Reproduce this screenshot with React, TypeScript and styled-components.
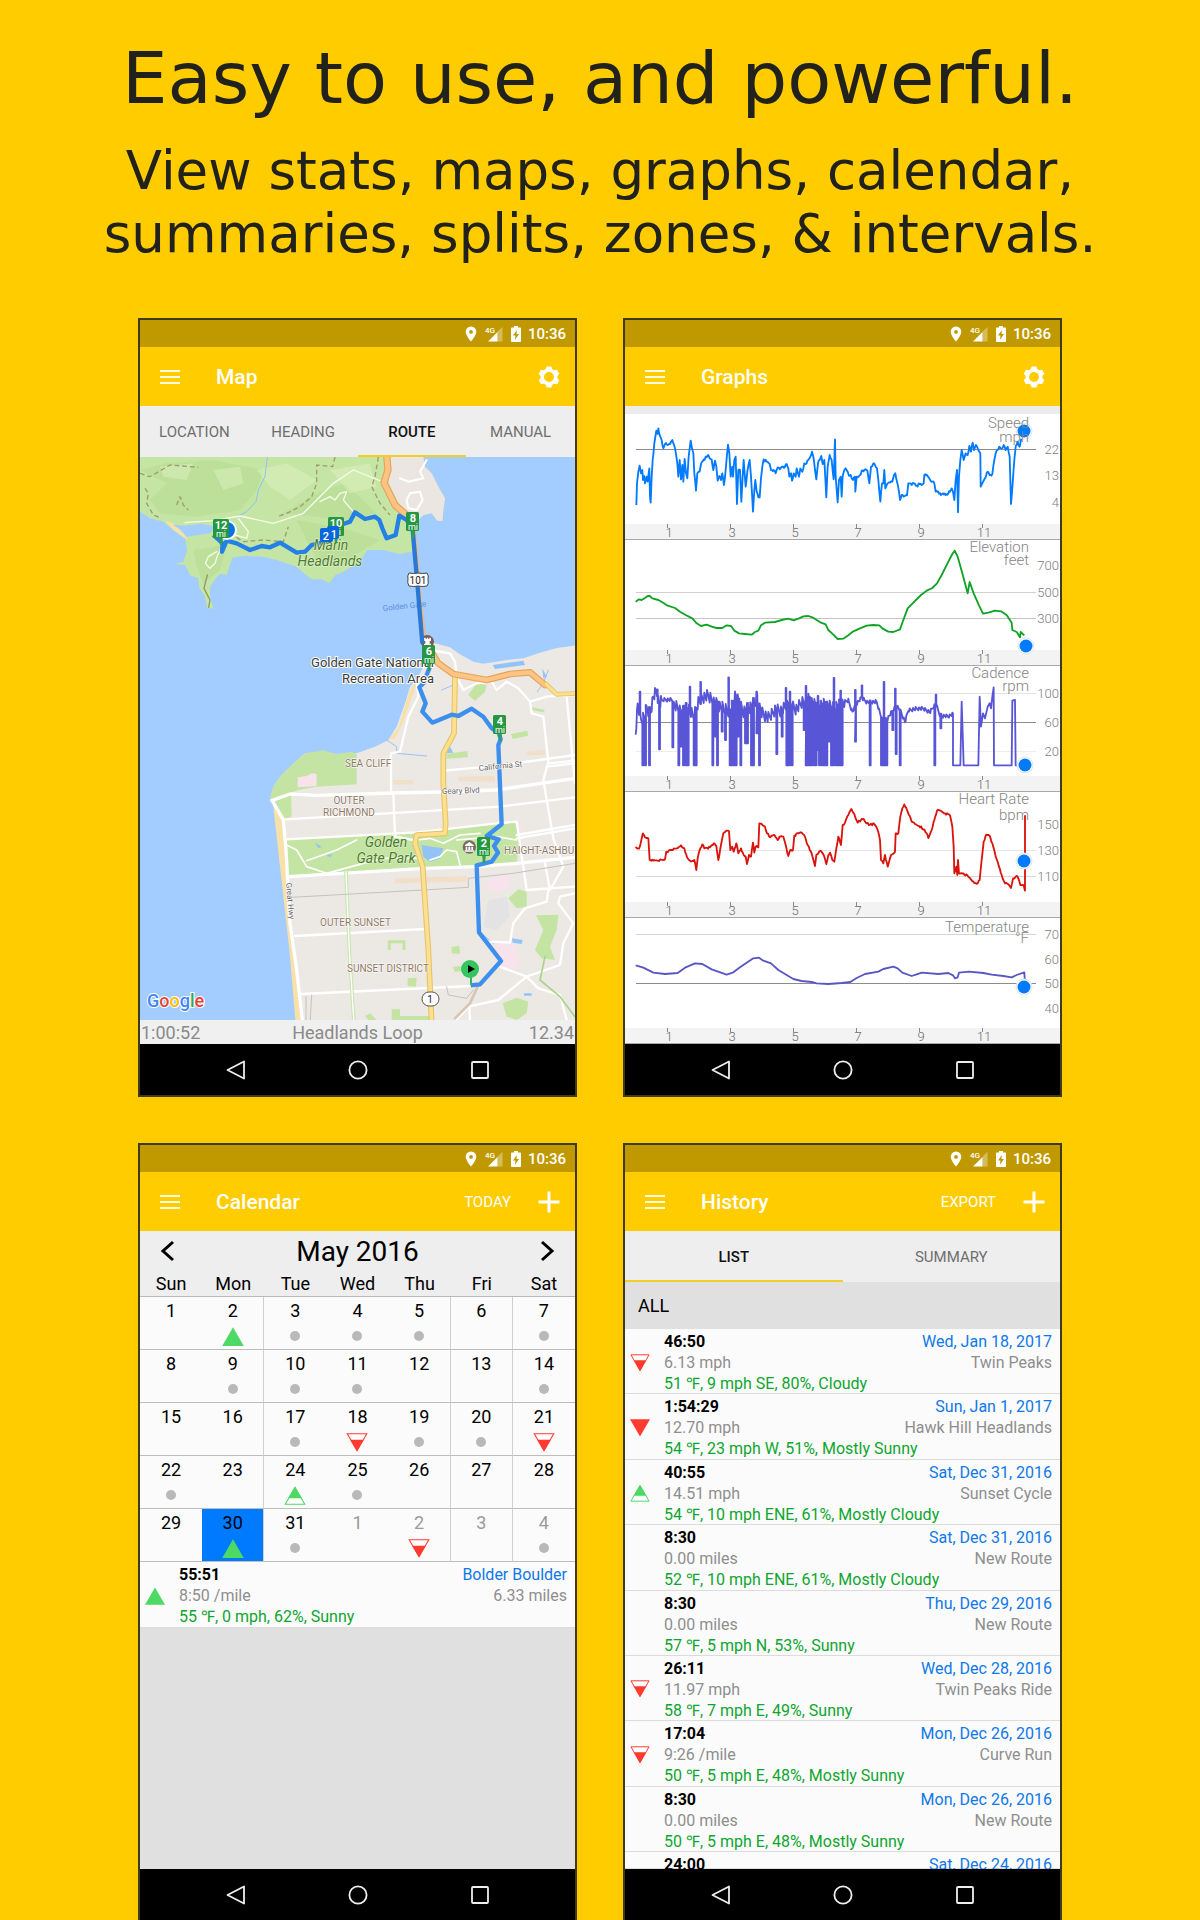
import React from 'react';
import styled, { createGlobalStyle } from 'styled-components';

const GlobalStyle = createGlobalStyle`
  * { box-sizing: border-box; }
  body { margin: 0; background: #ffcc00; }
  h1, h2, p, ul { margin: 0; padding: 0; }
  button { font: inherit; color: inherit; background: none; border: 0; padding: 0; cursor: pointer; }
`;

const UI = `Roboto, "Noto Sans", sans-serif`;

/* ---------- Page ---------- */

const Poster = styled.main`
  height: 100vh;
  overflow: hidden;
  padding-top: 36px;
  background: #ffcc00;
  font-family: ${UI};
`;

const Headline = styled.header`
  text-align: center;
  color: #22221c;
  font-family: "DejaVu Sans", sans-serif;
`;

const Title = styled.h1`
  font-size: 72px;
  line-height: 84px;
  font-weight: 400;
`;

const Subtitle = styled.p`
  margin-top: 19px;
  font-size: 53px;
  line-height: 63px;
`;

const PhoneGrid = styled.div`
  display: grid;
  grid-template-columns: 1fr 1fr;
  gap: 46px;
  margin-top: 53px;
  padding: 0 11.5%;
`;

/* ---------- Phone ---------- */

const PhoneFrame = styled.section`
  display: flex;
  flex-direction: column;
  aspect-ratio: 439 / 779;
  min-width: 0;
  border: 2px solid #403a1c;
  background: #eeeeee;
  overflow: hidden;
`;

const StatusBar = styled.div`
  flex: none;
  display: flex;
  align-items: center;
  justify-content: flex-end;
  height: 27px;
  padding-right: 9px;
  background: #c09900;
  color: #fff;
  font-size: 15px;
  font-weight: 500;
  svg { display: block; }
`;

const StatusIcons = styled.span`
  display: flex;
  align-items: center;
  gap: 8px;
  margin-right: 7px;
`;

const AppBar = styled.div`
  flex: none;
  display: flex;
  align-items: center;
  height: 59px;
  padding: 0 15px 0 20px;
  background: #ffcc00;
  color: #fff;
`;

const AppTitle = styled.h2`
  flex: 1;
  margin-left: 36px;
  font-size: 21px;
  line-height: 28px;
  font-weight: 500;
`;

const IconButton = styled.button`
  display: flex;
  align-items: center;
  justify-content: center;
  svg { display: block; }
`;

const TextAction = styled.button`
  margin-right: 27px;
  font-size: 15px;
  line-height: 20px;
`;

const Content = styled.div`
  flex: 1;
  min-height: 0;
  display: flex;
  flex-direction: column;
  overflow: hidden;
`;

const NavBar = styled.nav`
  flex: none;
  display: flex;
  align-items: center;
  justify-content: center;
  gap: 82px;
  height: 51px;
  background: #000;
`;

const NavButton = styled(IconButton)`
  width: 40px;
  height: 40px;
`;

const TabRow = styled.div`
  flex: none;
  display: flex;
  height: 51px;
  background: #eeeeee;
`;

const Tab = styled.button<{ $active?: boolean }>`
  flex: 1;
  padding-top: 2px;
  border-bottom: 2px solid ${p => (p.$active ? '#f0d028' : 'transparent')};
  color: ${p => (p.$active ? '#111' : '#6e6e6e')};
  font-size: 15px;
  font-weight: ${p => (p.$active ? 500 : 400)};
`;

const Svg = styled.svg`
  display: block;
  width: 100%;
  font-family: ${UI};
`;

function PinIcon() {
  return (
    <svg width="12" height="16" viewBox="0 0 12 16" fill="#fff">
      <path fillRule="evenodd" d="M6 0.5a5.2 5.2 0 0 1 5.3 5.3C11.3 9.5 6 15.6 6 15.6S.7 9.5.7 5.8A5.2 5.2 0 0 1 6 .5zM6 4a1.9 1.9 0 1 0 0 3.8A1.9 1.9 0 0 0 6 4z" />
    </svg>
  );
}

function SignalIcon() {
  return (
    <svg width="18" height="16" viewBox="0 0 18 16" fill="#fff">
      <path d="M12.5 5.5 17.5 1v14.5h-5z" opacity=".35" />
      <path d="M3 15.5 12.5 6v9.500z" />
      <text x="0" y="7" fontSize="8" fontWeight="500" fontFamily="Roboto, sans-serif">4G</text>
    </svg>
  );
}

function BatteryIcon() {
  return (
    <svg width="10" height="16" viewBox="0 0 10 16">
      <path fill="#fff" d="M3 0h4v1.600h2.200c.5 0 .8.3.8.800V15.200c0 .5-.3.8-.8.8H.8c-.5 0-.8-.3-.8-.800V2.400c0-.5.3-.8.800-.8H3z" />
      <path fill="#c09900" d="M5.800 4 2 9.600h2.400L4 13.700 8 8H5.500z" />
    </svg>
  );
}

function MenuIcon() {
  return (
    <svg width="20" height="14" viewBox="0 0 20 14" stroke="#fffbe0" strokeWidth="2">
      <path d="M0 1h20M0 7h20M0 13h20" />
    </svg>
  );
}

function GearIcon() {
  return (
    <svg width="22" height="22" viewBox="-11 -11 22 22">
      <circle r="6.700" fill="none" stroke="#fff" strokeWidth="3.400" />
      {[0, 60, 120, 180, 240, 300].map(a => (
        <path key={a} transform={`rotate(${a})`} d="M-3.600-7-2.300-10.600H2.300L3.600-7z" fill="#fff" />
      ))}
    </svg>
  );
}

function PlusIcon() {
  return (
    <svg width="22" height="22" viewBox="0 0 22 22" stroke="#fff" strokeWidth="3">
      <path d="M11 .5v21M.5 11h21" />
    </svg>
  );
}

function Phone({ title, action, icon, children }: {
  title: string; action?: string; icon: 'gear' | 'plus'; children: React.ReactNode;
}) {
  return (
    <PhoneFrame>
      <StatusBar>
        <StatusIcons>
          <PinIcon />
          <SignalIcon />
          <BatteryIcon />
        </StatusIcons>
        10:36
      </StatusBar>
      <AppBar>
        <IconButton aria-label="Menu"><MenuIcon /></IconButton>
        <AppTitle>{title}</AppTitle>
        {action && <TextAction>{action}</TextAction>}
        <IconButton aria-label={icon === 'gear' ? 'Settings' : 'Add'}>
          {icon === 'gear' ? <GearIcon /> : <PlusIcon />}
        </IconButton>
      </AppBar>
      <Content>{children}</Content>
      <NavBar>
        <NavButton aria-label="Back">
          <svg width="20" height="20" viewBox="0 0 20 20" fill="none" stroke="#eee" strokeWidth="1.800" strokeLinejoin="round"><path d="M18 1.500v17L1.500 10z" /></svg>
        </NavButton>
        <NavButton aria-label="Home">
          <svg width="20" height="20" viewBox="0 0 20 20" fill="none" stroke="#eee" strokeWidth="1.800"><circle cx="10" cy="10" r="8.600" /></svg>
        </NavButton>
        <NavButton aria-label="Recent apps">
          <svg width="20" height="20" viewBox="0 0 20 20" fill="none" stroke="#eee" strokeWidth="1.800"><rect x="2" y="2" width="16" height="16" rx="1" /></svg>
        </NavButton>
      </NavBar>
    </PhoneFrame>
  );
}

/* ---------- Map ---------- */

const MapArea = styled.div`
  flex: 1;
  min-height: 0;
  background: #a3ccff;
  svg { height: 100%; }
`;

const MapFooter = styled.div`
  flex: none;
  display: grid;
  grid-template-columns: 1fr auto 1fr;
  height: 24px;
  padding: 0 1px;
  background: #f0f0f0;
  color: #8a8a8a;
  font-size: 18px;
  line-height: 25px;
  span:last-child { text-align: right; }
`;

function MileMarker({ x, y, n }: { x: number; y: number; n: string }) {
  return (
    <g transform={`translate(${x} ${y})`}>
      <path d="M-2 17h4l-1 9h-2z" fill="#2ea04e" />
      <rect x={n.length > 1 ? -8 : -7} y="0" width={n.length > 1 ? 16 : 13} height="19" rx="1.500" fill="#259641" />
      <text y="10" textAnchor="middle" fontSize="11" fontWeight="700" fill="#fff">{n}</text>
      <text y="18" textAnchor="middle" fontSize="9" fill="#fff">mi</text>
    </g>
  );
}

function RouteMap() {
  return (
    <Svg viewBox="0 0 435 563" preserveAspectRatio="xMidYMid slice" role="img" aria-label="Route map">
      <g transform="scale(0.33333) translate(-30 -21)" fill="none" strokeLinejoin="round" strokeLinecap="round">
        <rect x="0" y="0" width="1400" height="1740" fill="#a3ccff" />

        {/* Headlands */}
        <path fill="#c5e5a5" d="M30 21H880L885 50 905 70 925 110 945 145 940 180 937 213 922 212 905 190 880 195 860 215 850 240 846 305 810 312 760 300 712 300 690 335 640 365 615 376 598 400 575 388 545 388 525 372 500 350 440 330 400 320 345 318 308 322 300 345 290 375 270 372 255 388 240 410 240 440 250 475 232 475 225 440 207 412 205 385 182 377 165 345 135 342 160 335 172 300 165 265 130 240 100 215 60 205 30 185z" />
        <path fill="#b5da91" d="M30 60 110 40 250 30 400 60 380 120 330 180 200 200 90 190 60 150 110 100zM460 190 560 130 640 100 700 150 740 190 640 210 560 200zM500 210 640 235 750 270 700 300 620 350 560 330zM190 300 290 285 270 360 220 400 200 350z" opacity=".55" />
        <path fill="#d8eebb" d="M90 50 190 40 170 90 100 80zM380 60 470 40 560 90 480 150 420 110zM600 60 720 40 740 110 660 130zM250 60 330 50 340 100 280 120z" opacity=".6" />
        <path fill="#ebe6e2" d="M782 21H880L885 50 905 70 925 110 945 145 940 180 937 213 922 212 905 190 880 195 860 215 848 210 810 170 776 100z" />
        <path fill="#f6e1ad" d="M105 212 130 220 160 250 172 268 160 262 130 240z" />
        <path fill="#a3ccff" d="M128 224 165 227 215 221 255 230 240 250 200 256 170 260 150 238z" />
        <path stroke="#8fc1f3" strokeWidth="3" d="M412 21 405 80 385 120 378 155 350 185 320 200" />
        <g stroke="#f7fbe9" strokeWidth="4">
          <path d="M165 218 250 212 330 198 430 220 520 190 560 150 610 100 670 60 750 92M570 155 600 140 615 150 630 130 650 125 640 150 670 185M325 205 355 245 350 265 300 250M260 305 235 320 226 340 240 355 255 340 262 318 270 300" />
          <path stroke="#fff" strokeWidth="6" d="M890 30 870 65 880 85 835 95 810 85M840 130 870 125 878 150 860 180 835 175 830 150z" />
        </g>
        <g stroke="#a09a6c" strokeWidth="4" strokeDasharray="14 9" strokeLinecap="butt">
          <path d="M30 70 60 80 120 45 205 52M45 115 55 130 50 160 70 195 95 205M615 21 608 50 560 45 560 100 545 140 510 170 470 190 440 200M745 21 735 80 725 110 750 160 780 195M300 250 340 275 400 270 460 275 475 230M140 165 150 140 160 165 175 180" />
        </g>
        <path stroke="#8f9a68" strokeWidth="4" d="M232 375 222 415 240 450 236 472" />
        <path stroke="#e9a25b" strokeWidth="22" d="M770 15 774 60 762 98 795 165 848 212" />
        <path stroke="#fbc483" strokeWidth="15" d="M770 15 774 60 762 98 795 165 848 212" />
        <path stroke="#e8b884" strokeWidth="7" d="M850 215 860 300 872 450 885 560" />

        {/* City */}
        <path fill="#ece8e4" d="M880 575 915 580 960 592 985 610 1030 635 1060 641 1130 630 1180 625 1230 608 1280 594 1340 586V1720H505L480 1500 470 1350 450 1200 437 1080 422 1048 430 1010 450 980 480 950 525 910 580 905 620 912 680 910 740 888 775 870 800 830 825 760 840 710 865 680 885 640z" />
        <path fill="#f8e0a9" d="M865 680 838 725 805 835 775 868 795 866 820 815 850 730zM430 1060 458 1105 485 1440 522 1720H497L478 1500 450 1250 432 1090z" />
        <path fill="#c3e4a2" d="M430 1010 450 980 480 950 525 910 580 901 620 912 665 905 680 912V1003L560 1010 505 1020 430 1048 420 1045zM432 1050 483 1025 485 1100 465 1108zM468 1168 860 1147 1155 1116 1168 1165 1160 1242 1040 1252 475 1278z" />
        <path fill="#c3e4a2" d="M1015 735 1040 700 1070 705 1065 725 1035 752zM1143 852 1192 842 1194 857 1148 867zM950 912 1012 903 1014 922 950 926zM1135 1345 1165 1318 1190 1325 1190 1370 1160 1375zM1218 1396 1285 1394 1280 1440 1260 1490 1275 1530 1235 1525 1215 1500 1240 1440zM1118 1660 1160 1643 1195 1655 1190 1690 1160 1710 1130 1700zM965 1490 988 1488 990 1512 965 1510zM968 1550 990 1548 998 1562 975 1566zM833 1585 860 1583 858 1610 833 1608zM785 1678H810V1698H900V1710H785zM705 1698 720 1690 740 1710H715zM1200 770 1245 780 1240 787 1205 780z" />
        <path fill="none" stroke="#c3e4a2" strokeWidth="9" strokeLinejoin="miter" strokeLinecap="butt" d="M778 1500V1475H822V1500" />
        <path fill="#f8e2ec" d="M503 982 530 978 545 970 560 972V1008L503 1012zM1085 1285 1130 1275 1140 1310 1100 1325 1060 1315zM1095 1480 1150 1475 1168 1520 1165 1560 1110 1550zM1160 1120 1175 1118 1180 1150 1165 1150z" />
        <path fill="#dfe0e4" d="M1075 1350 1130 1340 1140 1400 1100 1440 1060 1430z" opacity=".7" />
        <path fill="#93c3f6" d="M875 1185 905 1190 940 1195 930 1225 900 1235 880 1220zM555 1178 575 1190 565 1195zM590 1215 608 1213 600 1222zM1145 1465 1178 1470 1175 1482 1148 1478zM1088 645 1180 632 1185 645 1095 657zM1182 1630H1205V1637H1182zM1237 655 1250 680 1240 685zM945 910 960 890 970 908z" />
        <path stroke="#96c4f5" strokeWidth="3" d="M770 870 800 890 800 910 890 918M935 720 970 705M1255 660 1240 700 1222 725M1060 1455 1090 1480" />

        <g fill="#f8d7b4" opacity=".55">
          <path d="M795 1285 1010 1278V1295L795 1300zM790 990 850 990V1003L790 1003zM985 980 1095 978V995L985 993zM1190 905 1245 900V915L1190 915z" />
        </g>

        <g stroke="#fff" strokeWidth="7">
          <path strokeWidth="10" d="M425 1052 480 1032 560 1036 790 1029 930 1026 1100 1020 1335 985M428 1055 460 1110 468 1200 480 1420 500 1560 518 1720M475 1280 880 1255 1040 1250 1160 1240 1335 1222" />
          <path d="M465 1108 860 1085 1110 1070 1335 1042M783 1030V910L810 905 835 800 865 740 860 690M790 1030 795 1160 850 1170M468 1168 860 1147 1100 1120 1160 1115 1190 1320M940 962 1100 948 1335 915M1250 950 1335 940M1255 940 1335 932M1160 1165 1335 1135M1160 1155 1335 1125" />
          <path d="M495 1458 885 1437M515 1632 1020 1608M980 680 1000 720 1040 700 1085 695 1100 720 1130 695 1165 715 1200 755 1250 740 1335 735M1200 755 1205 790 1240 800 1255 935 1240 990 1270 1165M1310 740 1335 1000M1245 1240 1260 1320 1300 1250 1270 1165M900 600 960 610 975 635 980 680M1190 1320 1335 1310M1080 1475 1140 1478 1150 1420 1185 1375 1250 1355 1255 1320M1335 1330 1290 1340 1285 1360 1315 1400 1330 1420 1300 1480 1290 1545 1190 1580 1110 1550M1190 1580 1105 1650 1015 1670 975 1715M1190 1580 1225 1615 1290 1635 1310 1710M1018 1670 1020 1720" />
          <path strokeWidth="5" d="M470 1185 500 1200 530 1250 590 1270 700 1240 760 1225 860 1225M530 1232 620 1200 680 1170M860 1170 900 1165 940 1180 990 1155 1050 1150M900 1230 930 1220 950 1200 980 1205 990 1245M980 1170 1100 1160 1160 1170" />
        </g>
        <path stroke="#c9e7b1" strokeWidth="11" d="M648 1265 658 1500 672 1720" />
        <path stroke="#fff" strokeWidth="4" d="M648 1265 658 1500 672 1720" />
        <path stroke="#c5c1be" strokeWidth="3" d="M485 1342 880 1320 1015 1312V1285L1150 1270 1335 1240M545 1635 540 1720M950 1610 955 1635 1010 1645 1030 1620M528 1640V1720" />
        <g strokeWidth="17" stroke="#e5c069">
          <path d="M975 680 972 850 940 910 940 1000 947 1120 945 1150 860 1155 855 1180 878 1250 895 1500 905 1720" />
          <path stroke="#fce08c" strokeWidth="11" d="M975 680 972 850 940 910 940 1000 947 1120 945 1150 860 1155 855 1180 878 1250 895 1500 905 1720" />
          <path stroke="#e9a25b" strokeWidth="20" d="M890 580 925 640 970 672 1070 690 1140 672 1200 667 1245 705" />
          <path stroke="#fcc585" strokeWidth="13" d="M890 580 925 640 970 672 1070 690 1140 672 1200 667 1245 705" />
          <path d="M1248 702 1280 733 1345 730" strokeWidth="14" />
          <path d="M1248 702 1280 733 1345 730" strokeWidth="9" stroke="#fce08c" />
          <path stroke="#d9c4b0" strokeWidth="8" d="M975 1705 1020 1660 1045 1605" />
          <path stroke="#a9d58b" strokeWidth="5" d="M1245 1520 1230 1590 1290 1640 1335 1700" />
        </g>

        <circle cx="1018" cy="1191" r="20" fill="#7c6a64" />
        <path fill="#fff" d="M1005 1185 1018 1176 1031 1185V1188H1005zM1007 1190h5v10h-5zM1015 1190h6v10h-6zM1024 1190h5v10h-5zM1004 1201h28v4h-28z" />
        <circle cx="892" cy="575" r="20" fill="#7c5a52" />
        <path fill="#fff" d="M882 563h5v4h3v-4h5v4h3v-4h5v10h-4v8h4v6h-21v-6h4v-8h-4z" />
      </g>

      <text transform="translate(243 154) rotate(-6)" fontSize="8" fill="#5b8fd6">Golden Gate</text>

      <g transform="scale(0.33333) translate(-30 -21)" fill="none" strokeLinejoin="round" strokeLinecap="butt" stroke="#3d8fee" strokeWidth="13">
        <path d="M1022 1606 1050 1603 1113 1533 1047 1447 1040 1246 1085 1235 1104 1208 1092 1188 1106 1168 1070 1158 1115 1123 1105 885 1112 868 1107 850 1085 835 1060 800 1025 776 985 798 965 794 907 818 877 785 887 760 868 712 885 695 890 675 900 650 895 600" />
        <path stroke="#2a78d4" d="M877 580 862 400 848 240" />
        <path stroke="#2580e6" d="M848 240 830 210 808 197 797 255 770 265 757 235 748 210 735 200 705 207 675 187 660 215 640 222 605 240 590 275 545 285 525 305 500 308 450 278 420 292 395 288 360 300 320 280 290 272 276 305 278 280 250 255" />
      </g>

      <g fontSize="14" fontStyle="italic" fill="#4b7a2c" textAnchor="middle" stroke="#e7f5d6" strokeWidth="1" paintOrder="stroke">
        <text x="191" y="93">Marin</text>
        <text x="190" y="109">Headlands</text>
        <text x="246" y="390">Golden</text>
        <text x="246" y="406">Gate Park</text>
      </g>

      <text x="294" y="210" textAnchor="end" fontSize="13" fill="#3c3c3c" stroke="#fff" strokeWidth="2" paintOrder="stroke">Golden Gate National</text>
      <text x="294" y="226" textAnchor="end" fontSize="13" fill="#3c3c3c" stroke="#fff" strokeWidth="2" paintOrder="stroke">Recreation Area</text>

      <g fontSize="10" fill="#8d7763" stroke="#fff" strokeWidth="1" paintOrder="stroke">
        <text x="205" y="310">SEA CLIFF</text>
        <text x="209" y="347" textAnchor="middle">OUTER</text>
        <text x="209" y="359" textAnchor="middle">RICHMOND</text>
        <text x="364" y="397">HAIGHT-ASHBUR</text>
        <text x="180" y="469">OUTER SUNSET</text>
        <text x="207" y="515">SUNSET DISTRICT</text>
      </g>
      <g fontSize="8" fill="#5f5f5f" stroke="#fff" strokeWidth="1" paintOrder="stroke">
        <text transform="translate(339 314) rotate(-6)">California St</text>
        <text transform="translate(302 337) rotate(-2)">Geary Blvd</text>
        <text transform="translate(146 426) rotate(85)">Great Hwy</text>
      </g>

      <circle cx="87" cy="73" r="9" fill="#0a72e8" stroke="#fff" strokeWidth="2" />
      <MileMarker x={81} y={62} n="12" />
      <MileMarker x={196} y={60} n="10" />
      <MileMarker x={273} y={55} n="8" />
      <MileMarker x={289} y={188} n="6" />
      <MileMarker x={360} y={258} n="4" />
      <MileMarker x={344} y={380} n="2" />
      <g fontSize="11" fontWeight="500" fill="#fff" textAnchor="middle">
        <rect x="187" y="69" width="12" height="13" rx="2" fill="#0a66dc" />
        <rect x="180" y="71" width="13" height="14" rx="2" fill="#0a66dc" />
        <text x="186" y="83">2</text>
        <text x="194" y="81">1</text>
      </g>

      <path d="M269 116q4 1 9 0 5 1 9 0 2 3 1 6 1 5-1 7-5 1-9 0-4 1-9 0-2-3-1-7-1-3 1-6z" fill="#fff" stroke="#444" strokeWidth="1" />
      <text x="278" y="127" textAnchor="middle" fontSize="10" fill="#222">101</text>
      <rect x="282" y="535" width="17" height="14" rx="7" fill="#fff" stroke="#555" strokeWidth="1" />
      <text x="290" y="546" textAnchor="middle" fontSize="10" fill="#222">1</text>

      <path d="M330 518h2v10h-2z" fill="#35b85c" />
      <circle cx="330" cy="512" r="9" fill="#35c45d" />
      <path d="M328 508l7 4-7 4z" fill="#000" />

      <text x="7" y="550" fontSize="18" fontWeight="500" stroke="#fff" strokeWidth="2" paintOrder="stroke">
        <tspan fill="#4285f4">G</tspan><tspan fill="#ea4335">o</tspan><tspan fill="#fbbc05">o</tspan><tspan fill="#4285f4">g</tspan><tspan fill="#34a853">l</tspan><tspan fill="#ea4335">e</tspan>
      </text>
    </Svg>
  );
}

/* ---------- Graphs ---------- */

const ChartStack = styled.div`
  flex: 1;
  min-height: 0;
  display: grid;
  grid-template-rows: repeat(5, 1fr);
  padding-top: 8px;
  background: #ececec;
  svg { height: 100%; }
`;

/* Adds sensor noise between the samples of a trace. */
function roughen(path: string, amplitude: number) {
  const v = path.slice(1).split(' ').map(Number);
  const out: string[] = [`${v[0]} ${v[1]}`];
  for (let i = 2; i < v.length; i += 2) {
    const dx = v[i] - v[i - 2];
    const dy = v[i + 1] - v[i - 1];
    const steps = Math.max(1, Math.round(dx / 3));
    for (let s = 1; s < steps; s++) {
      const x = v[i - 2] + (dx * s) / steps;
      const noise = (((Math.round(x) * 29) % 17) / 16 - 0.5) * 2 * amplitude;
      out.push(`${x.toFixed(1)} ${(v[i - 1] + (dy * s) / steps + noise).toFixed(1)}`);
    }
    out.push(`${v[i]} ${v[i + 1]}`);
  }
  return `M${out.join(' ')}`;
}

type Tick = { y: number; label: string; line?: string };
type ChartProps = {
  name: string; unit: string; nameY: number; unitY: number;
  color: string; ticks: Tick[]; path: string; originY: number;
  dot: [number, number];
};

function Chart({ name, unit, nameY, unitY, color, ticks, path, originY, dot }: ChartProps) {
  return (
    <Svg viewBox="0 0 435 126" preserveAspectRatio="none" role="img" aria-label={name}>
      <rect width="435" height="126" fill="#fff" />
      <rect y="110" width="435" height="16" fill="#f3f3f3" />
      <path d="M0 125.500H435" stroke="#a9a9a9" />
      {ticks.map(t => t.line && <path key={t.y} d={`M11 ${t.y}.500H411`} stroke={t.line} />)}
      <g transform={`scale(0.33333) translate(-30 ${-originY})`}>
        <path d={path} fill="none" stroke={color} strokeWidth="5.500" strokeLinejoin="round" />
      </g>
      <circle cx={dot[0]} cy={dot[1]} r="8" fill="#fff" stroke="#dbe6f0" strokeWidth="1" />
      <circle cx={dot[0]} cy={dot[1]} r="6.500" fill="#007aff" />
      <g fill="#848484" fontSize="15" fontWeight="300" textAnchor="end">
        <text x="404" y={nameY}>{name}</text>
        <text x="404" y={unitY}>{unit}</text>
      </g>
      <g fill="#7c7c7c" fontSize="13" fontWeight="300" textAnchor="end">
        {ticks.map(t => <text key={t.label} x="434" y={t.y + 5}>{t.label}</text>)}
      </g>
      <g fill="#6c6c6c" fontSize="13" fontWeight="300" textAnchor="middle">
        {[1, 3, 5, 7, 9, 11].map((n, i) => (
          <React.Fragment key={n}>
            <path d={`M${42.5 + i * 63} 110v4`} stroke="#888" />
            <text x={44 + i * 63} y="123">{n}</text>
          </React.Fragment>
        ))}
      </g>
    </Svg>
  );
}

const speed = 'M64 585 66 520 70 485 74 467 78 490 82 480 84 510 88 498 90 520 95 500 98 515 103 475 105 560 107 578 110 500 113 450 118 400 124 362 128 372 130 355 135 378 140 390 145 415 150 402 158 405 165 402 172 390 177 405 183 432 187 460 190 500 194 450 198 508 202 465 205 515 209 447 213 490 217 505 221 440 224 415 227 392 231 415 235 430 238 490 243 542 247 490 254 485 258 462 266 448 275 442 280 435 284 445 290 448 295 480 300 452 304 470 308 512 313 498 318 510 322 490 327 525 332 480 335 445 339 404 343 430 347 500 352 470 354 500 358 450 362 440 366 582 370 480 375 480 379 575 383 500 386 450 392 530 397 485 404 450 408 500 414 605 418 540 421 510 425 545 430 562 434 562 438 505 442 470 446 448 455 455 464 462 468 480 476 480 482 490 488 472 495 478 502 470 510 470 515 462 520 475 523 500 528 490 531 512 536 490 542 500 545 475 552 500 556 475 562 485 568 460 575 460 580 450 586 440 591 425 595 440 600 480 604 508 609 460 614 450 619 438 623 462 628 450 634 562 638 470 644 435 650 450 656 508 658 450 660 388 662 500 668 577 672 510 677 500 680 560 683 500 688 480 692 475 698 485 702 497 707 495 714 510 720 500 721 545 725 500 735 495 740 482 748 480 757 482 763 520 768 470 775 460 780 465 786 475 790 510 796 575 801 520 805 520 808 480 811 535 818 520 825 518 832 515 837 495 841 490 846 515 852 545 855 570 860 555 866 560 876 556 880 520 890 525 897 520 905 527 914 522 920 525 926 520 928 495 936 495 943 505 952 515 958 520 962 545 970 545 978 555 984 550 992 555 1000 550 1005 545 1010 535 1014 545 1018 570 1022 510 1026 480 1029 607 1032 500 1036 450 1040 420 1046 450 1052 430 1058 435 1063 408 1068 425 1073 398 1077 420 1083 405 1090 420 1096 430 1097 530 1103 518 1110 505 1118 485 1124 495 1132 492 1138 450 1142 430 1147 420 1153 410 1160 415 1166 405 1172 420 1178 410 1184 440 1188 582 1193 520 1198 450 1202 410 1208 395 1214 410 1218 390 1222 375 1228 362';

const elevation = 'M62 875 72 868 80 870 90 864 98 858 104 858 112 865 130 870 142 877 158 887 180 894 195 905 212 915 232 925 245 940 258 948 275 944 290 950 305 954 322 954 335 946 348 948 358 962 372 970 390 972 410 974 420 966 430 962 438 946 450 938 480 936 500 930 520 926 536 931 552 925 565 919 580 918 592 922 605 930 618 938 632 943 640 960 655 974 668 987 685 986 700 976 715 964 735 955 755 947 775 945 793 946 803 956 820 965 835 966 855 958 865 930 878 895 895 878 918 855 935 842 952 834 966 820 980 795 1000 755 1012 732 1019 722 1028 740 1042 790 1058 850 1064 816 1076 850 1092 886 1104 911 1120 908 1140 902 1158 904 1175 915 1190 938 1192 960 1205 966 1215 982 1217 966 1228 976';

const heartRate = 'M62 560 72 566 78 545 84 520 90 532 100 535 104 600 115 602 150 598 154 575 165 570 185 565 198 556 208 565 216 592 225 602 238 600 244 630 248 595 254 570 262 553 268 565 285 562 296 550 304 558 310 600 318 555 325 520 335 512 342 514 346 570 352 560 356 575 364 550 370 580 378 565 386 585 392 590 396 612 402 585 408 590 414 548 418 578 422 560 430 562 433 490 440 492 450 500 456 520 466 532 478 525 488 540 496 530 505 530 512 555 520 588 526 570 534 570 538 527 550 520 560 518 570 530 578 555 588 575 600 618 604 585 618 573 628 590 634 612 640 585 645 578 652 600 658 605 664 565 670 530 678 555 683 495 690 488 700 465 709 447 718 462 728 488 738 480 746 477 755 490 765 494 778 492 788 510 795 540 798 600 805 610 810 585 818 620 828 585 840 575 842 520 850 520 856 470 862 445 868 433 876 450 890 485 900 492 912 498 928 508 935 520 940 534 950 510 958 480 966 452 978 453 990 460 1005 466 1012 500 1016 560 1018 640 1024 620 1027 645 1029 600 1032 640 1045 640 1060 650 1075 665 1088 670 1094 660 1100 600 1106 545 1114 524 1124 527 1132 550 1142 590 1152 620 1160 645 1170 670 1182 675 1188 684 1194 655 1204 648 1210 655 1216 675 1226 676 1230 692 1230 466';

const temperature = 'M62 196 85 203 115 218 150 222 188 219 212 202 240 190 262 192 290 208 335 224 355 217 375 202 415 175 432 173 445 182 468 190 490 210 535 237 560 243 590 246 605 250 640 252 680 249 706 246 725 234 750 222 790 215 805 207 835 200 848 205 862 218 890 228 905 223 920 218 970 222 1000 219 1014 226 1020 235 1028 232 1032 218 1062 215 1105 219 1130 224 1165 228 1190 232 1205 225 1228 217 1230 250';

const envelope: [number, number][] = [
  [62, 210], [68, 130], [78, 175], [88, 165], [95, 140], [105, 160], [115, 105], [125, 92], [132, 130],
  [145, 118], [170, 118], [180, 135], [195, 150], [220, 140], [235, 170], [250, 120], [262, 110], [280, 105],
  [300, 125], [320, 140], [345, 150], [360, 105], [385, 150], [410, 135], [425, 115], [440, 155], [460, 172],
  [480, 145], [500, 150], [520, 130], [545, 145], [560, 125], [580, 115], [600, 135], [625, 130], [650, 140],
  [680, 130], [700, 120], [712, 155], [725, 130], [740, 112], [755, 125], [785, 125], [800, 175], [815, 180],
  [830, 155], [845, 135], [858, 155], [870, 185], [880, 150], [905, 145], [925, 145], [945, 155], [962, 130],
  [975, 165], [1000, 168], [1018, 160],
];
const coasts = [82, 90, 103, 132, 173, 190, 198, 205, 212, 218, 236, 242, 292, 298, 307, 320, 330, 345, 349, 352, 357, 362, 370, 376, 390, 397, 408, 414, 424, 432, 484, 500, 514, 518, 522, 530, 566, 572, 578, 583, 588, 592, 596, 600, 603, 608, 612, 620, 624, 628, 634, 640, 648, 652, 655, 662, 666, 670, 676, 681, 720, 764, 798, 802, 806, 811, 815, 832, 842, 855, 958, 976];
const shallow: Record<number, number> = { 132: 268, 173: 262, 198: 260, 298: 230, 320: 215, 330: 240, 370: 230, 397: 250, 424: 220, 484: 282, 500: 230, 566: 210, 592: 250, 608: 270, 640: 245, 720: 245, 832: 210, 842: 282, 976: 205, 390: 250 };
const peaks: Record<number, number> = { 74: 95, 126: 88, 224: 80, 256: 66, 340: 52, 424: 95, 512: 84, 524: 95, 572: 78, 608: 108, 657: 54, 676: 92, 720: 90, 741: 76, 807: 66, 841: 86, 962: 104 };

function envelopeAt(x: number) {
  const i = Math.max(1, envelope.findIndex(p => p[0] >= x));
  const [x0, y0] = envelope[i - 1];
  const [x1, y1] = envelope[i];
  return y0 + ((y1 - y0) * (x - x0)) / (x1 - x0);
}

function buildCadence() {
  const points: string[] = [];
  for (let x = 62; x <= 1014; x += 2) {
    const busy = x < 690 && (x < 140 || x > 178) ? 40 : 12;
    const jitter = (((x * 37) % 23) / 23 - 0.4) * busy;
    const y = Math.round(envelopeAt(x) + jitter);
    points.push(`${x} ${y}`);
    const peak = Object.keys(peaks).map(Number).find(p => p === x || p === x + 1);
    if (peak) points.push(`${x} ${peaks[peak]}`, `${x + 2} ${peaks[peak]}`, `${x + 2} ${y}`);
    const coast = coasts.find(c => c === x || c === x + 1);
    if (coast) {
      const floor = shallow[coast] || 316;
      points.push(`${x} ${floor}`, `${x + 3} ${floor}`, `${x + 3} ${y}`);
    }
  }
  return `M${points.join(' ')} 1014 316 1036 316 1040 125 1043 220 1046 316 1090 316 1094 110 1098 200 1104 160 1110 175 1118 140 1124 130 1128 145 1132 110 1136 82 1137 316 1190 316 1192 122 1200 120 1202 316 1228 316`;
}

function Graphs() {
  return (
    <ChartStack>
      <Chart name="Speed" unit="mph" nameY={14} unitY={28} color="#007aff" originY={312} dot={[399, 17]} path={roughen(speed, 4)}
        ticks={[{ y: 35, label: '22', line: '#8c8c8c' }, { y: 61, label: '13' }, { y: 88, label: '4' }]} />
      <Chart name="Elevation" unit="feet" nameY={12} unitY={25} color="#0fa326" originY={690} dot={[401, 106]} path={elevation}
        ticks={[{ y: 25, label: '700' }, { y: 52, label: '500', line: '#d0d0d0' }, { y: 78, label: '300', line: '#c4c4c4' }]} />
      <Chart name="Cadence" unit="rpm" nameY={12} unitY={25} color="#5856d6" originY={18} dot={[400, 99]} path={buildCadence()}
        ticks={[{ y: 27, label: '100', line: '#e2e2e2' }, { y: 56, label: '60', line: '#8c8c8c' }, { y: 85, label: '20', line: '#ececec' }]} />
      <Chart name="Heart Rate" unit="bpm" nameY={12} unitY={28} color="#d9140c" originY={396} dot={[399, 69]} path={roughen(heartRate, 3)}
        ticks={[{ y: 32, label: '150' }, { y: 58, label: '130', line: '#e6e6e6' }, { y: 84, label: '110', line: '#d8d8d8' }]} />
      <Chart name="Temperature" unit="°F" nameY={14} unitY={25} color="#5856c4" originY={54} dot={[399, 69]} path={temperature}
        ticks={[{ y: 16, label: '70', line: '#d4d8d4' }, { y: 41, label: '60' }, { y: 65, label: '50', line: '#8c8c8c' }, { y: 90, label: '40' }]} />
    </ChartStack>
  );
}

/* ---------- Effort symbols ---------- */

type Mark = 'up' | 'upHalf' | 'down' | 'downHalf';

function EffortMark({ kind, size }: { kind: Mark; size: number }) {
  const up = kind === 'up' || kind === 'upHalf';
  const color = up ? '#4cd964' : '#ff3b30';
  const half = kind === 'upHalf' || kind === 'downHalf';
  return (
    <svg width={size} height={Math.round(size * 0.88)} viewBox="0 0 22 19.400">
      <g transform={up ? undefined : 'translate(0 19.400) scale(1 -1)'}>
        {half ? (
          <>
            <path d="M11 1.500 21 18.700H1z" fill="#fff" stroke={color} strokeWidth="1.100" />
            <path d="M11 .5 18 12.600H4z" fill={color} />
          </>
        ) : <path d="M11 .3 22 19.400H0z" fill={color} />}
      </g>
    </svg>
  );
}

/* ---------- Activity rows ---------- */

type Activity = { mark?: Mark; time: string; pace: string; weather: string; title: string; detail: string };

const Row = styled.div`
  display: grid;
  grid-template-columns: 30px auto 1fr;
  grid-template-rows: repeat(3, 21px);
  align-content: start;
  column-gap: 9px;
  height: 100%;
  padding: 2px 8px 0 0;
  border-bottom: 1px solid #dcdcdc;
  background: #fbfbfb;
  font-size: 16px;
  line-height: 22px;
  white-space: nowrap;
`;

const MarkCell = styled.span`
  grid-row: 1 / 4;
  display: flex;
  align-items: center;
  justify-content: center;
`;

const Time = styled.b`
  color: #000;
  font-weight: 700;
`;

const Heading = styled.span`
  text-align: right;
  color: #0f78ea;
`;

const Muted = styled.span<{ $end?: boolean }>`
  text-align: ${p => (p.$end ? 'right' : 'left')};
  color: #8e8e8e;
`;

const Weather = styled.span`
  grid-column: 2 / 4;
  color: #0ea62e;
`;

function ActivityRow({ a }: { a: Activity }) {
  return (
    <Row>
      <MarkCell>{a.mark && <EffortMark kind={a.mark} size={20} />}</MarkCell>
      <Time>{a.time}</Time>
      <Heading>{a.title}</Heading>
      <Muted>{a.pace}</Muted>
      <Muted $end>{a.detail}</Muted>
      <Weather>{a.weather}</Weather>
    </Row>
  );
}

/* ---------- Calendar ---------- */

const MonthBar = styled.div`
  flex: none;
  display: flex;
  align-items: center;
  justify-content: space-between;
  height: 40px;
  padding: 0 20px;
  color: #000;
  font-size: 28px;
`;

const MonthTable = styled.table`
  flex: none;
  width: 100%;
  table-layout: fixed;
  border-collapse: separate;
  border-spacing: 0;
  color: #000;
  font-size: 18px;
`;

const WeekDay = styled.th`
  padding: 0;
  border-bottom: 1px solid #b9b9b9;
  font-weight: 400;
  line-height: 25px;
`;

const DayCell = styled.td<{ $selected?: boolean; $rule?: boolean; $other?: boolean }>`
  height: 53px;
  padding: 0;
  border-bottom: 1px solid #bdbdbd;
  border-right: ${p => (p.$rule ? '1px solid #cfcfcf' : '0')};
  background: ${p => (p.$selected ? '#007aff' : '#fbfbfb')};
  color: ${p => (p.$other ? '#9a9a9a' : '#000')};
  line-height: 28px;
  vertical-align: top;
`;

const DayButton = styled.button`
  display: flex;
  flex-direction: column;
  align-items: center;
  width: 100%;
  height: 52px;
`;

const MarkSlot = styled.span`
  display: flex;
  align-items: center;
  height: 22px;
`;

const Dot = styled.span`
  width: 10px;
  height: 10px;
  border-radius: 50%;
  background: #b9b9b9;
`;

const EmptyArea = styled.div`
  flex: 1;
  background: #e0e0e0;
`;

const dayMarks: Record<number, Mark | 'dot'> = {
  1: 'up', 2: 'dot', 3: 'dot', 4: 'dot', 6: 'dot',
  8: 'dot', 9: 'dot', 10: 'dot', 13: 'dot',
  16: 'dot', 17: 'downHalf', 18: 'dot', 19: 'dot', 20: 'downHalf',
  21: 'dot', 23: 'upHalf', 24: 'dot',
  29: 'up', 30: 'dot', 32: 'downHalf', 34: 'dot',
};

function Calendar() {
  return (
    <>
      <MonthBar>
        <IconButton aria-label="Previous month">
          <svg width="15" height="22" viewBox="0 0 15 22" fill="none" stroke="#000" strokeWidth="3"><path d="M13 2 3 11l10 9" /></svg>
        </IconButton>
        <span>May 2016</span>
        <IconButton aria-label="Next month">
          <svg width="15" height="22" viewBox="0 0 15 22" fill="none" stroke="#000" strokeWidth="3"><path d="M2 2l10 9-10 9" /></svg>
        </IconButton>
      </MonthBar>
      <MonthTable>
        <thead>
          <tr>{['Sun', 'Mon', 'Tue', 'Wed', 'Thu', 'Fri', 'Sat'].map(d => <WeekDay key={d}>{d}</WeekDay>)}</tr>
        </thead>
        <tbody>
          {[0, 1, 2, 3, 4].map(w => (
            <tr key={w}>
              {[0, 1, 2, 3, 4, 5, 6].map(d => {
                const i = w * 7 + d;
                const mark = dayMarks[i];
                return (
                  <DayCell key={d} $selected={i === 29} $rule={d === 1 || d === 4 || d === 5} $other={i > 30}>
                    <DayButton>
                      <span>{i > 30 ? i - 30 : i + 1}</span>
                      <MarkSlot>
                        {mark === 'dot' && <Dot />}
                        {mark && mark !== 'dot' && <EffortMark kind={mark} size={22} />}
                      </MarkSlot>
                    </DayButton>
                  </DayCell>
                );
              })}
            </tr>
          ))}
        </tbody>
      </MonthTable>
      <div>
        <ActivityRow a={{ mark: 'up', time: '55:51', pace: '8:50 /mile', weather: '55 ℉, 0 mph, 62%, Sunny', title: 'Bolder Boulder', detail: '6.33 miles' }} />
      </div>
      <EmptyArea />
    </>
  );
}

/* ---------- History ---------- */

const GroupHeader = styled.div`
  flex: none;
  height: 47px;
  padding-left: 13px;
  background: #e0e0e0;
  color: #000;
  font-size: 18px;
  line-height: 48px;
`;

const HistoryList = styled.ul`
  flex: 1;
  min-height: 0;
  display: grid;
  grid-template-rows: repeat(8, 1fr) 17px;
  overflow: hidden;
  list-style: none;
  li { min-height: 0; }
`;

const history: Activity[] = [
  { mark: 'downHalf', time: '46:50', pace: '6.13 mph', weather: '51 ℉, 9 mph SE, 80%, Cloudy', title: 'Wed, Jan 18, 2017', detail: 'Twin Peaks' },
  { mark: 'down', time: '1:54:29', pace: '12.70 mph', weather: '54 ℉, 23 mph W, 51%, Mostly Sunny', title: 'Sun, Jan 1, 2017', detail: 'Hawk Hill Headlands' },
  { mark: 'upHalf', time: '40:55', pace: '14.51 mph', weather: '54 ℉, 10 mph ENE, 61%, Mostly Cloudy', title: 'Sat, Dec 31, 2016', detail: 'Sunset Cycle' },
  { time: '8:30', pace: '0.00 miles', weather: '52 ℉, 10 mph ENE, 61%, Mostly Cloudy', title: 'Sat, Dec 31, 2016', detail: 'New Route' },
  { time: '8:30', pace: '0.00 miles', weather: '57 ℉, 5 mph N, 53%, Sunny', title: 'Thu, Dec 29, 2016', detail: 'New Route' },
  { mark: 'downHalf', time: '26:11', pace: '11.97 mph', weather: '58 ℉, 7 mph E, 49%, Sunny', title: 'Wed, Dec 28, 2016', detail: 'Twin Peaks Ride' },
  { mark: 'downHalf', time: '17:04', pace: '9:26 /mile', weather: '50 ℉, 5 mph E, 48%, Mostly Sunny', title: 'Mon, Dec 26, 2016', detail: 'Curve Run' },
  { time: '8:30', pace: '0.00 miles', weather: '50 ℉, 5 mph E, 48%, Mostly Sunny', title: 'Mon, Dec 26, 2016', detail: 'New Route' },
  { time: '24:00', pace: '', weather: '', title: 'Sat, Dec 24, 2016', detail: '' },
];

export default function App() {
  return (
    <Poster>
      <GlobalStyle />
      <Headline>
        <Title>Easy to use, and powerful.</Title>
        <Subtitle>View stats, maps, graphs, calendar,<br />summaries, splits, zones, &amp; intervals.</Subtitle>
      </Headline>
      <PhoneGrid>
        <Phone title="Map" icon="gear">
          <TabRow>
            <Tab>LOCATION</Tab>
            <Tab>HEADING</Tab>
            <Tab $active>ROUTE</Tab>
            <Tab>MANUAL</Tab>
          </TabRow>
          <MapArea><RouteMap /></MapArea>
          <MapFooter><span>1:00:52</span><span>Headlands Loop</span><span>12.34</span></MapFooter>
        </Phone>
        <Phone title="Graphs" icon="gear"><Graphs /></Phone>
        <Phone title="Calendar" action="TODAY" icon="plus"><Calendar /></Phone>
        <Phone title="History" action="EXPORT" icon="plus">
          <TabRow>
            <Tab $active>LIST</Tab>
            <Tab>SUMMARY</Tab>
          </TabRow>
          <GroupHeader>ALL</GroupHeader>
          <HistoryList>
            {history.map((a, i) => <li key={i}><ActivityRow a={a} /></li>)}
          </HistoryList>
        </Phone>
      </PhoneGrid>
    </Poster>
  );
}
